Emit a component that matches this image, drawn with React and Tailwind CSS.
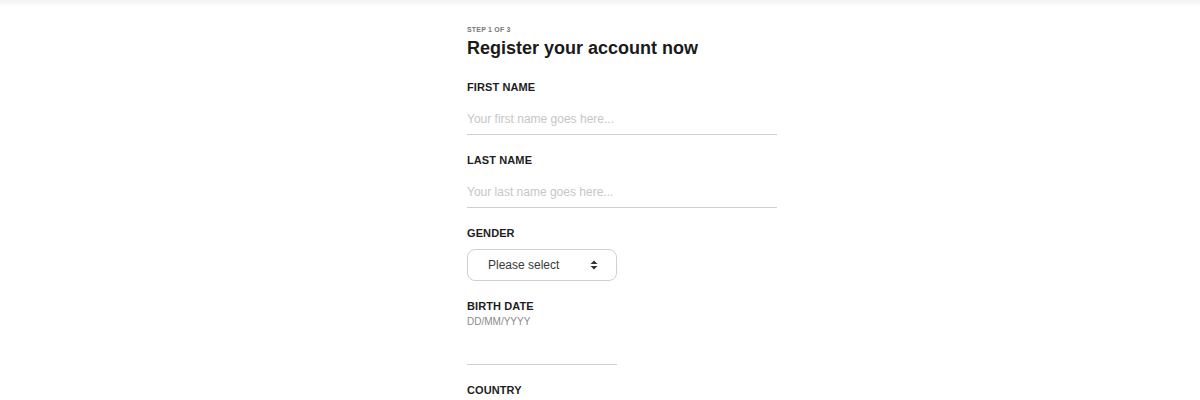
import React from "react";

function Label({ children, className = "" }) {
  return (
    <div className={"text-[11px] leading-[14px] font-bold text-[#1e1e1e] tracking-[0.1px] " + className}>
      {children}
    </div>
  );
}

function LineInput({ placeholder, className = "" }) {
  return (
    <input
      type="text"
      placeholder={placeholder}
      className={
        "block w-[310px] pt-[17px] pb-[7px] leading-[16px] text-[12px] text-[#333] placeholder:text-[#c6c6c6] border-b border-[#cfcfcf] outline-none bg-transparent " +
        className
      }
    />
  );
}

export default function App() {
  return (
    <div className="h-[400px] overflow-hidden bg-white" style={{ fontFamily: '"Liberation Sans", Arial, sans-serif' }}>
      <div className="h-[7px] bg-gradient-to-b from-[#f2f2f2] to-white" />
      <div className="pl-[467px]">
        <div className="mt-[19px] text-[7px] leading-[8px] font-semibold text-[#777] tracking-[0.2px]">STEP 1 OF 3</div>
        <h1 className="mt-[3px] text-[18px] leading-[22px] font-bold text-[#1a1a1a]">Register your account now</h1>

        <Label className="mt-[21px]">FIRST NAME</Label>
        <LineInput placeholder="Your first name goes here..." />

        <Label className="mt-[18px]">LAST NAME</Label>
        <LineInput placeholder="Your last name goes here..." />

        <Label className="mt-[18px]">GENDER</Label>
        <div className="mt-[9px] w-[150px] h-[32px] rounded-lg border border-[#cfcfcf] flex items-center pl-[20px] pr-[18px] justify-between">
          <span className="text-[12px] text-[#3a3a3a]">Please select</span>
          <svg width="8" height="10" viewBox="0 0 8 10" className="block">
            <path d="M4 0.5 L7.5 4 L0.5 4 Z" fill="#333" />
            <path d="M4 9.5 L7.5 6 L0.5 6 Z" fill="#333" />
          </svg>
        </div>

        <Label className="mt-[18px]">BIRTH DATE</Label>
        <div className="mt-[4px] text-[10px] leading-[10px] text-[#8a8a8a]">DD/MM/YYYY</div>
        <div className="h-[38px] w-[150px] border-b border-[#cfcfcf]" />

        <Label className="mt-[18px]">COUNTRY</Label>
      </div>
    </div>
  );
}
